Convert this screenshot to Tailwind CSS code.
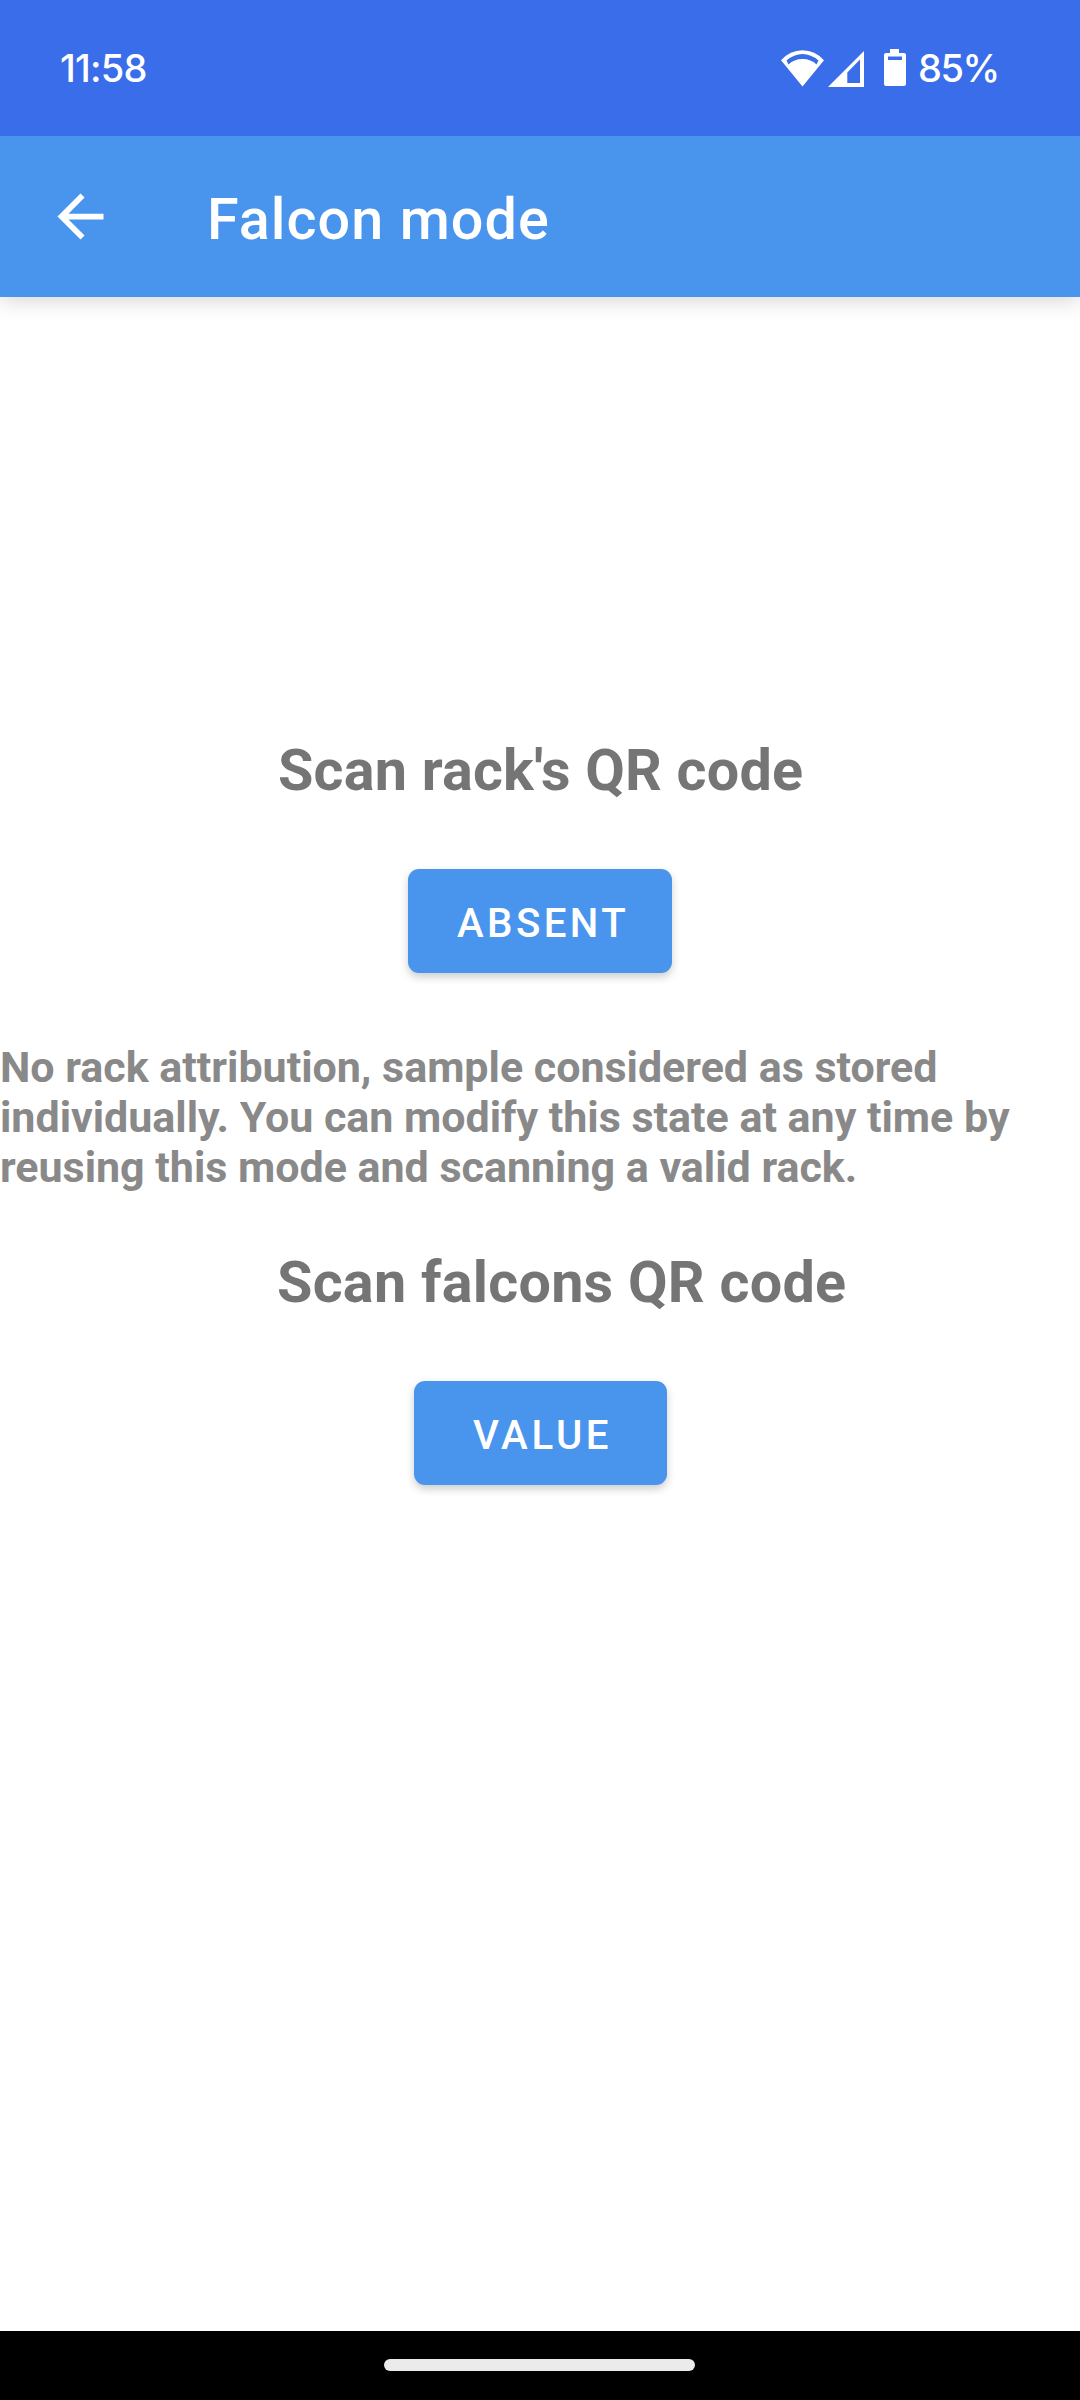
<!DOCTYPE html>
<html lang="en">
<head>
<meta charset="utf-8">
<title>Falcon mode</title>
<script src="https://cdn.jsdelivr.net/npm/@tailwindcss/browser@4"></script>
</head>
<body class="bg-white">
<div class="flex h-[2400px] w-[1080px] flex-col overflow-hidden bg-white font-[Roboto,sans-serif]">
  <div class="relative z-10 flex h-[136px] shrink-0 items-center bg-[#396dea] pl-[60px] font-[Inter,sans-serif] text-[38px] font-medium text-white">
    <span class="w-[721px] tracking-[-0.75px]">11:58</span>
    <svg class="h-[40px] w-[126px] shrink-0" viewBox="781 48 126 40" fill="#fff">
      <path fill-rule="evenodd" d="M781 60.200Q790 50.200 802.500 50.200T824 60.200L802.500 86.500ZM786.500 60.500L788.500 64.500Q794 59 802.500 59T816.500 64.500L818.500 60.500Q811 54 802.500 54T786.500 60.500Z"/>
      <path fill-rule="evenodd" d="M864 51V87H828ZM860 59.500L847.300 72.500V83H860Z"/>
      <path fill-rule="evenodd" d="M890 49h9v4h5a2 2 0 0 1 2 2v29a2 2 0 0 1-2 2h-18a2 2 0 0 1-2-2v-29a2 2 0 0 1 2-2h4ZM888 56.500v3.500h14v-3.500Z"/>
    </svg>
    <span class="ml-[11px] tracking-[-1.5px]">85%</span>
  </div>
  <header class="flex h-[161px] shrink-0 items-center bg-[#4994ec] pl-[46px] text-white shadow-[0_4px_20px_rgba(0,0,0,0.16)]">
    <svg class="size-[69px]" viewBox="0 0 24 24" fill="#fff"><path d="M20 11H7.830l5.590-5.590L12 4l-8 8 8 8 1.410-1.410L7.830 13H20v-2z"/></svg>
    <h1 class="ml-[92px] pt-[6px] text-[57.5px] leading-[68px] font-medium tracking-[1.06px]">Falcon mode</h1>
  </header>
  <main class="flex flex-1 flex-col items-start pt-[440px]">
    <h2 class="ml-[278px] text-[57.5px] leading-[68px] font-bold tracking-[0.2px] whitespace-nowrap text-[#757575]">Scan rack's QR code</h2>
    <button class="mt-[64px] ml-[408px] flex h-[104px] w-[264px] items-center rounded-[11px] bg-[#4994ec] pt-[6px] pl-[49px] text-[40.25px] font-medium tracking-[3.4px] text-white shadow-[0_4px_9px_rgba(0,0,0,0.2)]">ABSENT</button>
    <p class="mt-[69px] text-[43px] leading-[50px] font-bold tracking-[-0.02px] whitespace-nowrap text-[#898989]">No rack attribution, sample considered as stored<br>individually. You can modify this state at any time by<br>reusing this mode and scanning a valid rack.</p>
    <h2 class="mt-[57px] ml-[277px] text-[57.5px] leading-[68px] font-bold tracking-[0.25px] whitespace-nowrap text-[#757575]">Scan falcons QR code</h2>
    <button class="mt-[64px] ml-[414px] flex h-[104px] w-[253px] items-center rounded-[11px] bg-[#4994ec] pt-[6px] pl-[59px] text-[40.25px] font-medium tracking-[3.6px] text-white shadow-[0_4px_9px_rgba(0,0,0,0.2)]">VALUE</button>
  </main>
  <div class="flex h-[69px] shrink-0 bg-black pt-[28px] pl-[384px]">
    <div class="h-[12px] w-[311px] rounded-full bg-[#ebebeb]"></div>
  </div>
</div>
</body>
</html>
